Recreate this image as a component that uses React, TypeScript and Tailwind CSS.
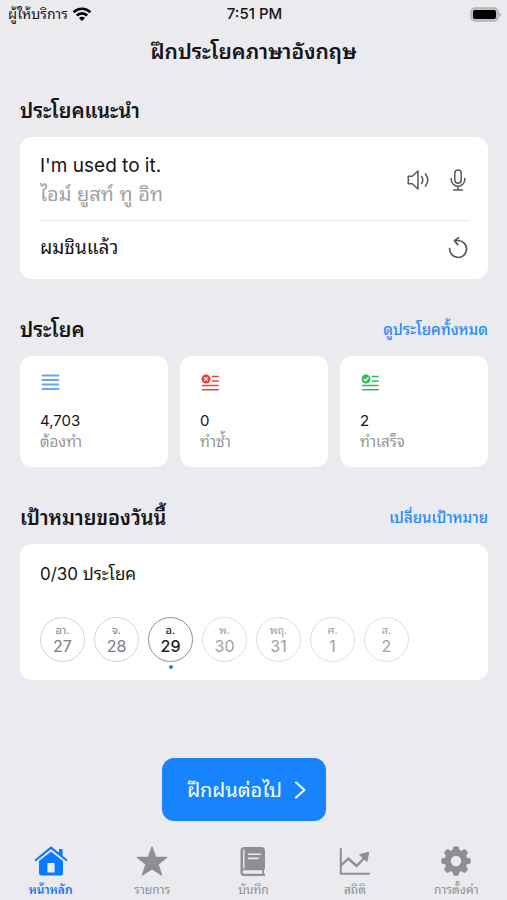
import type { ReactNode } from "react";

type Day = {
  name: string;
  date: number;
  state: "past" | "today" | "next";
};

const days: Day[] = [
  { name: "อา.", date: 27, state: "past" },
  { name: "จ.", date: 28, state: "past" },
  { name: "อ.", date: 29, state: "today" },
  { name: "พ.", date: 30, state: "next" },
  { name: "พฤ.", date: 31, state: "next" },
  { name: "ศ.", date: 1, state: "next" },
  { name: "ส.", date: 2, state: "next" },
];

const dayStyles = {
  past: "border-[#d2d2d4] text-[#7c7c7e]",
  today: "border-[#929294] font-medium text-[#1c1c1e]",
  next: "border-[#e0e0e2] text-[#a0a0a2]",
};

const WifiIcon = () => (
  <svg width="20" height="14" viewBox="0 0 20 14" fill="none" stroke="#000" strokeWidth="2.6" aria-hidden="true">
    <path d="M1.6 5.2C6.3.6 13.700.6 18.400 5.200" />
    <path d="M4.800 8.500c2.900-2.900 7.500-2.900 10.400 0" />
    <path d="M10 14 7 10.900c1.700-1.600 4.300-1.600 6 0Z" fill="#000" stroke="none" />
  </svg>
);

const BatteryIcon = () => (
  <svg width="31" height="15" viewBox="0 0 31 15" aria-hidden="true">
    <rect x="1" y="1" width="27" height="13" rx="4" fill="#c4c4c7" stroke="#b0b0b3" strokeWidth="1.4" />
    <rect x="3" y="3" width="23" height="9" rx="2" fill="#000" />
    <path d="M29.300 5.300c2 .8 2 3.800 0 4.600Z" fill="#a9a9ac" />
  </svg>
);

const SpeakerIcon = () => (
  <svg width="24" height="24" viewBox="0 0 24 24" fill="none" stroke="#58585a" strokeWidth="1.5" strokeLinejoin="round" strokeLinecap="round" aria-hidden="true">
    <path d="M2.200 8.200h4L12 3v18l-5.800-5.200h-4V13l.5-1-.5-1Z" />
    <path d="M15.600 8.500c1.500 2.200 1.500 4.800 0 7M19.400 5.800c3 3.900 3 8.500 0 12.400" />
  </svg>
);

const MicIcon = () => (
  <svg width="24" height="24" viewBox="0 0 24 24" fill="none" stroke="#58585a" strokeWidth="1.5" strokeLinecap="round" aria-hidden="true">
    <rect x="8.800" y="2" width="6.400" height="13.200" rx="3.200" />
    <path d="M5.200 10.500v1a6.800 6.800 0 0 0 13.600 0v-1M12 18.300v3.400M7.600 22h8.800" />
  </svg>
);

const ReplayIcon = () => (
  <svg width="24" height="24" viewBox="0 0 24 24" fill="none" stroke="#58585a" strokeWidth="1.700" strokeLinecap="round" strokeLinejoin="round" aria-hidden="true">
    <path d="M3.600 12.500a8.500 8.500 0 1 0 9-8H8.800" />
    <path d="M12.500 1.800 8.500 4.600l3.200 4" />
  </svg>
);

const ListIcon = () => (
  <svg width="20" height="18" viewBox="0 0 20 18" stroke="#6ba7ee" strokeWidth="1.900" strokeLinecap="round" aria-hidden="true">
    <path d="M2.500 1.500h16M2.500 6h16M2.500 10.500h16M2.500 15h16" />
  </svg>
);

const MarkedListIcon = ({ color, mark }: { color: string; mark: string }) => (
  <svg width="20" height="18" viewBox="0 0 20 18" fill="none" stroke={color} strokeWidth="1.500" strokeLinecap="round" aria-hidden="true">
    <circle cx="6" cy="5" r="4.500" fill={color} stroke="none" />
    <path d={mark} stroke="#fff" strokeWidth="1.300" />
    <path d="M12.500 2.500h5.700M12.500 7h5.700M2.500 11.500h15.700M2.500 15.700h15.700" />
  </svg>
);

const HomeIcon = () => (
  <svg width="36" height="32" viewBox="0 0 36 32" aria-hidden="true">
    <path d="M26 4h3.600v8L26 9Z" fill="#0a7aff" />
    <path d="M2.800 15 18 2.700 33.200 15" fill="none" stroke="#0a7aff" strokeWidth="2.200" strokeLinecap="round" strokeLinejoin="round" />
    <path d="M18 6.400 30 16v12.200a2.300 2.300 0 0 1-2.300 2.300H8.300A2.300 2.300 0 0 1 6 28.200V16Zm-3.600 11.500v9.600h7.200v-9.600Z" fill="#0a7aff" fillRule="evenodd" />
  </svg>
);

const StarIcon = () => (
  <svg width="36" height="32" viewBox="0 0 36 32" fill="#8e8e93" stroke="#8e8e93" strokeWidth="1.200" strokeLinejoin="round" aria-hidden="true">
    <path d="m18 2 3.700 10.400h11.100l-8.700 7 3.500 10.700L18 23.700l-9.600 6.400 3.500-10.700-8.700-7h11.100Z" />
  </svg>
);

const NoteIcon = () => (
  <svg width="36" height="32" viewBox="0 0 36 32" aria-hidden="true">
    <path d="M9.500 2h17A3.500 3.500 0 0 1 30 5.500v18.800h-1v4.500h1V31H9a3.500 3.500 0 0 1-3.500-3.500V6a4 4 0 0 1 4-4Z" fill="#8e8e93" />
    <path d="M8.800 4.500v19" stroke="#eaeaef" strokeWidth="1.400" />
    <path d="M9.200 25.200H27.300v3.600H9.200a1.800 1.800 0 0 1 0-3.600Z" fill="#eaeaef" />
    <path d="M13.500 9.200h12M13.500 13.400h9.500" stroke="#eaeaef" strokeWidth="1.600" strokeLinecap="round" />
  </svg>
);

const ChartIcon = () => (
  <svg width="36" height="32" viewBox="0 0 36 32" fill="none" stroke="#8e8e93" strokeWidth="2" strokeLinecap="round" strokeLinejoin="round" aria-hidden="true">
    <path d="M3.800 4v24.700H32" />
    <path d="m4 20.500 7.200-7L19.700 21 28.500 11.500" strokeWidth="2.400" />
    <path d="m22.800 9.600 9-2.300-1.900 9Z" fill="#8e8e93" strokeWidth="1" />
  </svg>
);

const GearIcon = () => (
  <svg width="36" height="32" viewBox="0 0 36 32" fill="#8e8e93" aria-hidden="true">
    {[0, 45, 90, 135, 180, 225, 270, 315].map((angle) => (
      <path key={angle} d="M14.200 7 15 3q.2-1.800 1.800-1.800h2.400Q20.800 1.200 21 3l.8 4Z" transform={`rotate(${angle} 18 16)`} />
    ))}
    <circle cx="18" cy="16" r="8.300" fill="none" stroke="#8e8e93" strokeWidth="6.200" />
  </svg>
);

const tabs = [
  { label: "หน้าหลัก", icon: <HomeIcon />, active: true },
  { label: "รายการ", icon: <StarIcon /> },
  { label: "บันทึก", icon: <NoteIcon /> },
  { label: "สถิติ", icon: <ChartIcon /> },
  { label: "การตั้งค่า", icon: <GearIcon /> },
];

const SectionHeader = ({ title, link }: { title: string; link?: string }) => (
  <div className="flex h-8 items-center justify-between">
    <h2 className="text-xl leading-8 font-semibold">{title}</h2>
    {link && (
      <a href="#" className="text-[15px] leading-8 font-medium text-[#2588f8]">
        {link}
      </a>
    )}
  </div>
);

const StatCard = ({ icon, value, label }: { icon: ReactNode; value: string; label: string }) => (
  <button type="button" className="flex flex-col items-start rounded-xl bg-white px-5 pt-[18px] pb-[15px] text-left">
    {icon}
    <span className="mt-[18px] text-[15px] leading-[22px]">{value}</span>
    <span className="text-[15px] leading-5 text-[#949496]">{label}</span>
  </button>
);

export default function App() {
  return (
    <div className="flex min-h-screen flex-col bg-[#eaeaef] font-['Inter','Noto_Sans_Thai_Looped','Loma','Waree','Garuda','Noto_Sans_Thai','Noto_Sans',sans-serif] text-[#151517]">
      <div className="grid h-7 grid-cols-3 items-center pr-[6px] pl-2 text-[15px]">
        <div className="flex items-center gap-1">
          <span className="text-sm">ผู้ให้บริการ</span>
          <WifiIcon />
        </div>
        <span className="text-center font-medium">7:51 PM</span>
        <div className="flex justify-end">
          <BatteryIcon />
        </div>
      </div>

      <header className="flex h-12 items-center justify-center">
        <h1 className="text-[21px] font-semibold">ฝึกประโยคภาษาอังกฤษ</h1>
      </header>

      <main className="flex flex-col pt-[19px] pr-[19px] pl-5">
        <section>
          <SectionHeader title="ประโยคแนะนำ" />
          <div className="mt-[10px] rounded-xl bg-white px-5">
            <div className="-mr-px flex items-center justify-between border-b border-[#e9e9eb] pt-[15px] pb-3">
              <div>
                <p className="text-[19px] leading-7">I'm used to it.</p>
                <p className="text-xl leading-7 text-[#a0a0a2]">ไอม์ ยูสท์ ทู อิท</p>
              </div>
              <div className="-mr-px flex gap-4">
                <button type="button" aria-label="ฟัง">
                  <SpeakerIcon />
                </button>
                <button type="button" aria-label="พูด">
                  <MicIcon />
                </button>
              </div>
            </div>
            <div className="-mr-0.5 flex h-[58px] items-center justify-between pb-1">
              <p className="text-[19px] leading-7">ผมชินแล้ว</p>
              <button type="button" aria-label="เริ่มใหม่">
                <ReplayIcon />
              </button>
            </div>
          </div>
        </section>

        <section className="mt-[35px]">
          <SectionHeader title="ประโยค" link="ดูประโยคทั้งหมด" />
          <div className="mt-[10px] grid grid-cols-3 gap-3">
            <StatCard icon={<ListIcon />} value="4,703" label="ต้องทำ" />
            <StatCard icon={<MarkedListIcon color="#ee4038" mark="m4.600 3.600 2.800 2.800m0-2.800L4.600 6.400" />} value="0" label="ทำซ้ำ" />
            <StatCard icon={<MarkedListIcon color="#32b957" mark="m4 5.200 1.500 1.500L8.200 3.800" />} value="2" label="ทำเสร็จ" />
          </div>
        </section>

        <section className="mt-[35px]">
          <SectionHeader title="เป้าหมายของวันนี้" link="เปลี่ยนเป้าหมาย" />
          <div className="mt-[10px] rounded-xl bg-white px-5 pt-4 pb-[11px]">
            <p className="text-[17px] leading-7">0/30 ประโยค</p>
            <ul className="mt-[29px] flex gap-[9px]">
              {days.map((day) => (
                <li key={day.date} className="flex flex-col items-center">
                  <div className={`flex size-[45px] flex-col items-center justify-center rounded-full border ${dayStyles[day.state]}`}>
                    <span className="text-[11px] leading-3">{day.name}</span>
                    <span className="text-base leading-5">{day.date}</span>
                  </div>
                  {day.state === "today" && <span className="mt-[3px] size-1 rounded-full bg-[#1784fd]" />}
                </li>
              ))}
            </ul>
          </div>
        </section>
      </main>

      <div className="mt-auto flex justify-center pr-[19px] pb-6">
        <button type="button" className="flex h-[63px] items-center gap-3 rounded-xl bg-[#1784fd] px-[25px] pr-5 text-xl text-white">
          <span>ฝึกฝนต่อไป</span>
          <svg width="12" height="18" viewBox="0 0 12 18" fill="none" stroke="#fff" strokeWidth="1.900" strokeLinecap="round" strokeLinejoin="round" aria-hidden="true">
            <path d="m2 1.500 8.500 7.500L2 16.500" />
          </svg>
        </button>
      </div>

      <nav className="grid grid-cols-5">
        {tabs.map((tab) => (
          <button
            key={tab.label}
            type="button"
            aria-current={tab.active ? "page" : undefined}
            className={`flex flex-col items-center gap-[3px] text-xs leading-5 ${tab.active ? "font-semibold text-[#0a7aff]" : "text-[#8e8e93]"}`}
          >
            {tab.icon}
            <span>{tab.label}</span>
          </button>
        ))}
      </nav>
    </div>
  );
}
